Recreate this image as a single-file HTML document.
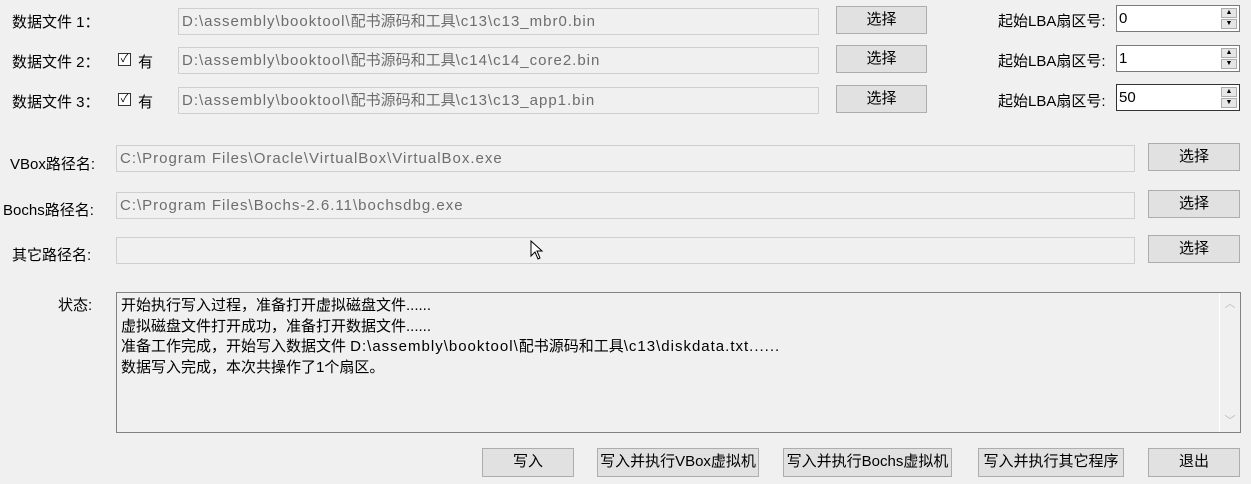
<!DOCTYPE html>
<html><head><meta charset="utf-8"><style>
body{margin:0;width:1251px;height:484px;background:#f0f0f0;font-family:"Liberation Sans","Noto Sans CJK SC",sans-serif;font-size:15px;color:#000;position:relative;overflow:hidden}
.a{position:absolute;white-space:nowrap}
.l{letter-spacing:1px}
.in{position:absolute;box-sizing:border-box;border:1px solid #cfcfcf;background:#f0f0f0;color:#6d6d6d;padding-left:3px;line-height:25px;white-space:nowrap;overflow:hidden}
.bt{position:absolute;box-sizing:border-box;border:1px solid #adadad;background:#e1e1e1;text-align:center;line-height:26px;white-space:nowrap}
.sp{position:absolute;box-sizing:border-box;border:1px solid #7a7a7a;background:#fff;width:124px;height:27px;line-height:26px;padding-left:2px}
.sp .ar{position:absolute;right:2px;width:16px;height:10px;border:1px solid #adadad;background:#e6e6e6;box-sizing:border-box;font-size:7px;line-height:8px;text-align:center}
.cb{position:absolute;width:13px;height:13px;border:1px solid #333;background:#fff;box-sizing:border-box;font-size:11px;line-height:11px;text-align:center}
</style></head><body>
<div class="a" style="left:12px;top:11px">数据文件 1：</div>
<div class="a" style="left:12px;top:51px">数据文件 2：</div>
<div class="a" style="left:12px;top:91px">数据文件 3：</div>
<div class="cb" style="left:118px;top:53px">✓</div><div class="a" style="left:138px;top:51px">有</div>
<div class="cb" style="left:118px;top:93px">✓</div><div class="a" style="left:138px;top:91px">有</div>
<div class="in" style="left:178px;top:8px;width:641px;height:27px"><span class="l">D:\assembly\booktool\</span>配书源码和工具<span class="l">\c13\c13_mbr0.bin</span></div>
<div class="in" style="left:178px;top:47px;width:641px;height:27px"><span class="l">D:\assembly\booktool\</span>配书源码和工具<span class="l">\c14\c14_core2.bin</span></div>
<div class="in" style="left:178px;top:87px;width:641px;height:27px"><span class="l">D:\assembly\booktool\</span>配书源码和工具<span class="l">\c13\c13_app1.bin</span></div>
<div class="bt" style="left:836px;top:6px;width:91px;height:28px">选择</div>
<div class="bt" style="left:836px;top:45px;width:91px;height:28px">选择</div>
<div class="bt" style="left:836px;top:85px;width:91px;height:28px">选择</div>
<div class="a" style="left:998px;top:10px">起始LBA扇区号:</div>
<div class="a" style="left:998px;top:50px">起始LBA扇区号:</div>
<div class="a" style="left:998px;top:90px">起始LBA扇区号:</div>
<div class="sp" style="left:1116px;top:5px">0<div class="ar" style="top:2px">▲</div><div class="ar" style="top:13px">▼</div></div>
<div class="sp" style="left:1116px;top:45px">1<div class="ar" style="top:2px">▲</div><div class="ar" style="top:13px">▼</div></div>
<div class="sp" style="left:1116px;top:84px;border-color:#333">50<div class="ar" style="top:2px">▲</div><div class="ar" style="top:13px">▼</div></div>
<div class="a" style="left:10px;top:153px">VBox路径名:</div>
<div class="a" style="left:3px;top:199px">Bochs路径名:</div>
<div class="a" style="left:12px;top:244px">其它路径名:</div>
<div class="in" style="left:116px;top:145px;width:1019px;height:27px"><span class="l">C:\Program Files\Oracle\VirtualBox\VirtualBox.exe</span></div>
<div class="in" style="left:116px;top:192px;width:1019px;height:27px"><span class="l">C:\Program Files\Bochs-2.6.11\bochsdbg.exe</span></div>
<div class="in" style="left:116px;top:237px;width:1019px;height:27px"></div>
<div class="bt" style="left:1148px;top:143px;width:92px;height:28px">选择</div>
<div class="bt" style="left:1148px;top:190px;width:92px;height:28px">选择</div>
<div class="bt" style="left:1148px;top:235px;width:92px;height:28px">选择</div>
<svg class="a" style="left:530px;top:240px" width="14" height="20"><path d="M1 1 L1 16 L5 12 L8 19 L10 18 L7 11 L12 11 Z" fill="#fff" stroke="#000"/></svg>
<div class="a" style="left:58px;top:294px">状态:</div>
<div style="position:absolute;left:116px;top:292px;width:1125px;height:141px;box-sizing:border-box;border:1px solid #828282;background:#f0f0f0">
<div style="position:absolute;left:4px;top:3px;line-height:20.5px">开始执行写入过程，准备打开虚拟磁盘文件......<br>虚拟磁盘文件打开成功，准备打开数据文件......<br>准备工作完成，开始写入数据文件 <span class="l">D:\assembly\booktool\</span>配书源码和工具<span class="l">\c13\diskdata.txt......</span><br>数据写入完成，本次共操作了1个扇区。</div>
<div style="position:absolute;right:0;top:0;width:20px;height:139px;border-left:1px solid #fff;color:#bbb;font-size:11px;text-align:center"><div style="margin-top:2px">︿</div><div style="position:absolute;bottom:4px;width:20px">﹀</div></div>
</div>
<div class="bt" style="left:482px;top:448px;width:92px;height:29px">写入</div>
<div class="bt" style="left:597px;top:448px;width:162px;height:29px">写入并执行VBox虚拟机</div>
<div class="bt" style="left:783px;top:448px;width:169px;height:29px">写入并执行Bochs虚拟机</div>
<div class="bt" style="left:978px;top:448px;width:146px;height:29px">写入并执行其它程序</div>
<div class="bt" style="left:1148px;top:448px;width:92px;height:29px">退出</div>
</body></html>
